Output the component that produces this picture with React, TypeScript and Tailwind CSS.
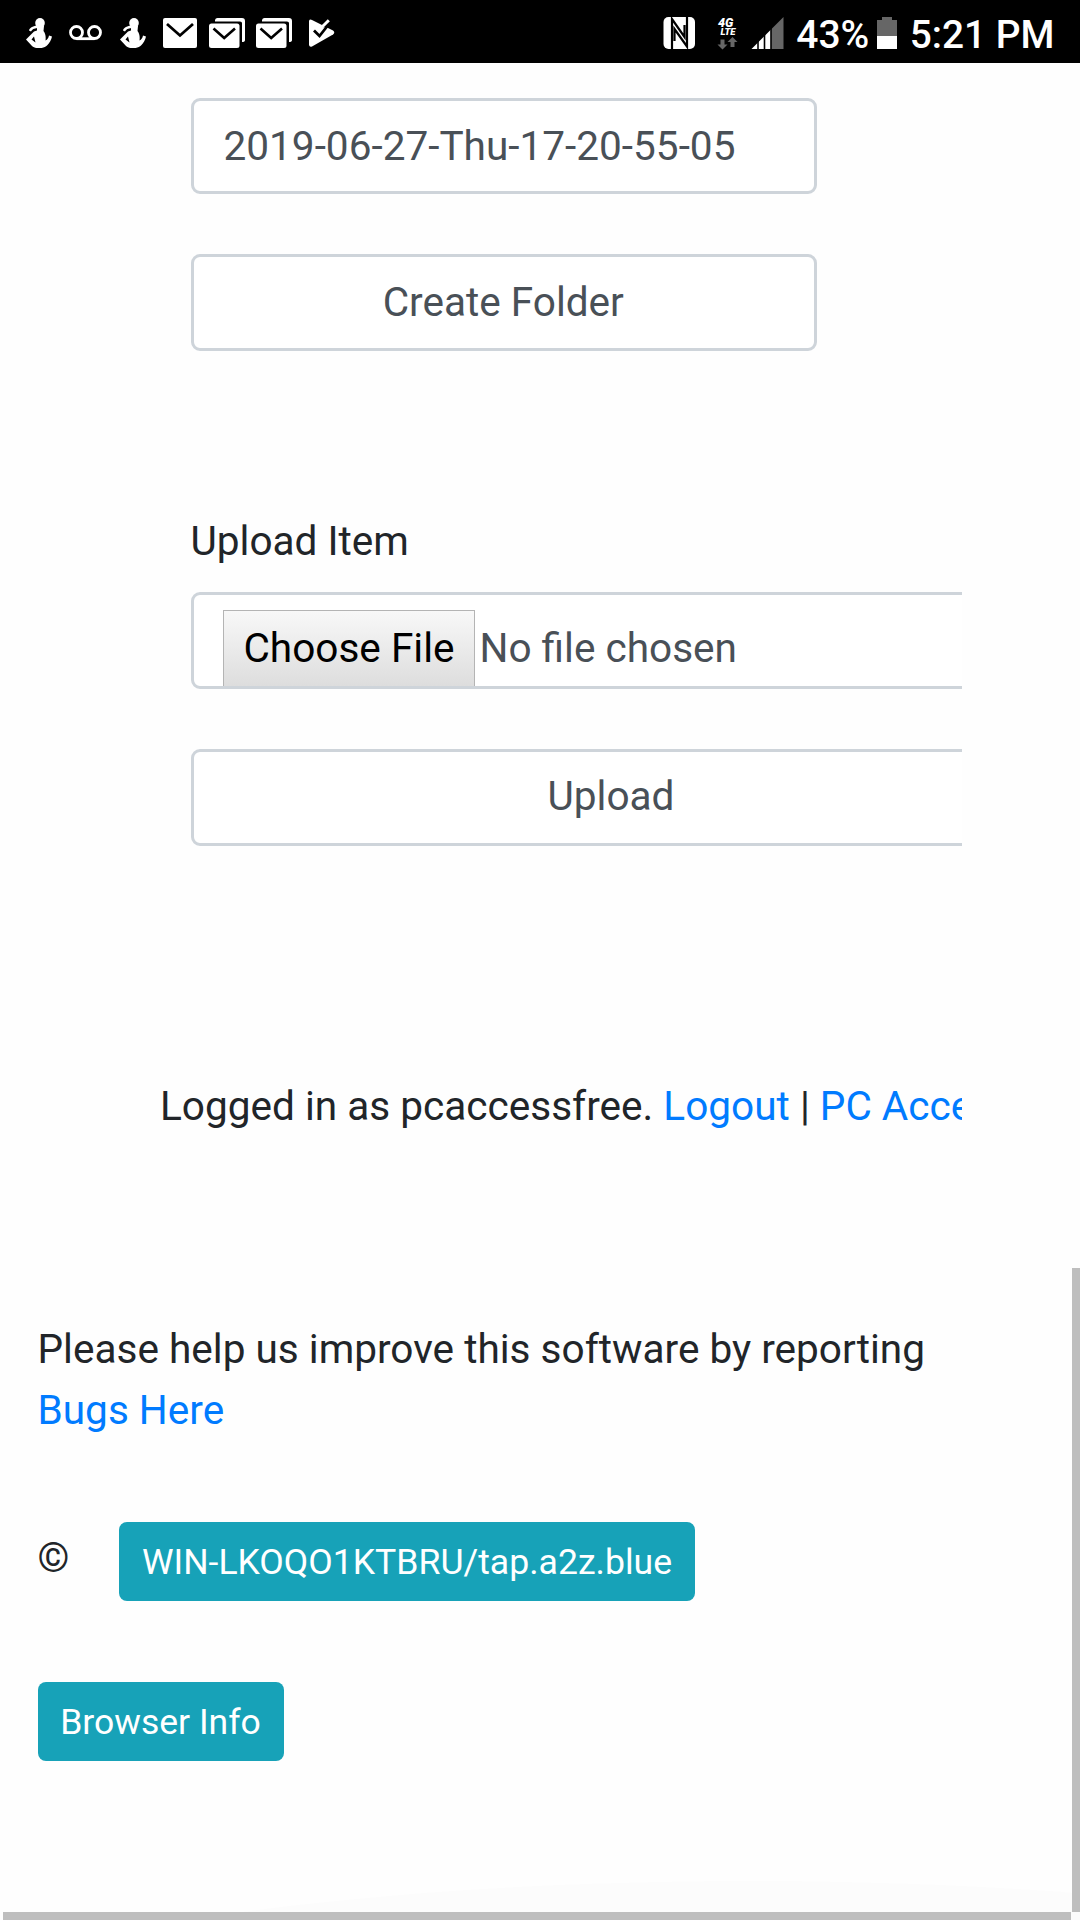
import React from "react";

function PersonIcon() {
  return (
    <svg viewBox="0 0 26 30" width="26" height="30" fill="#fff" className="shrink-0">
      <ellipse cx="14" cy="5" rx="4.8" ry="5" />
      <path d="M11 8h7l-.5 5c2 2.500 2.500 6 2 9.500 2-1 3-2.500 3.500-5l3 1c-.5 3-2.500 6.500-5 9-2.500 3-11 4-15 .5L0 21.500l8-8 3-1z" />
      <path d="M3 12.500c.5-2.500 3.500-4.500 8-5l.5 2.500C8 10.300 6 11.500 5 13.500z" />
      <path d="M5.500 21.500L8 18.500l1.500 6z" fill="#000" />
    </svg>
  );
}

function MailStack() {
  return (
    <svg viewBox="0 0 36 30" width="36" height="30" className="shrink-0">
      <path d="M6 2Q6.500 0 8.500 0H33Q36 0 36 3V22Q36 24 33 24V5Q33 3.500 31 3.500H6z" fill="#fff" />
      <rect x="0" y="5.500" width="30.500" height="24.500" rx="2.500" fill="#fff" />
      <path d="M4.500 10.500L15.200 20L26 10.500" fill="none" stroke="#000" strokeWidth="2.600" />
    </svg>
  );
}

function StatusBar() {
  return (
    <header className="flex h-[63px] w-full items-start bg-black pl-[26px]">
      <div className="mt-[17.500px] flex h-[30px] items-center">
        <PersonIcon />
        <svg viewBox="0 0 33 16" width="33" height="16" fill="none" stroke="#fff" strokeWidth="2.800" className="ml-[17px] shrink-0">
          <circle cx="7.500" cy="7.500" r="6" />
          <circle cx="25.500" cy="7.500" r="6" />
          <path d="M7.500 13.700H25.500" />
        </svg>
        <span className="w-[18px]" />
        <PersonIcon />
        <svg viewBox="0 0 34 30" width="34" height="30" className="ml-[16.500px] shrink-0">
          <rect width="34" height="30" rx="2" fill="#fff" />
          <path d="M4 6L17 17.500L30 6" fill="none" stroke="#000" strokeWidth="2.800" />
        </svg>
        <span className="w-[12.500px]" />
        <MailStack />
        <span className="w-[11px]" />
        <MailStack />
        <svg viewBox="0 0 28 30" width="28" height="30" className="ml-[16px] shrink-0">
          <path d="M1 2.500Q2 1 4 2L25 12.500Q27.500 14.500 25 16.500L4 28.500Q1.500 29.500 1 27z" fill="#fff" />
          <path d="M12.500 9.500L19 1L24 4.500L21.500 9z" fill="#000" />
          <path d="M6 12.500L11.500 18L19 8.500" fill="none" stroke="#000" strokeWidth="2.800" />
          <path d="M10.500 12.500L20.800 2.300" fill="none" stroke="#fff" strokeWidth="3" />
        </svg>
      </div>
      <div className="ml-auto mr-[26px] flex items-start text-white">
        <svg viewBox="0 0 128 34" width="128" height="34" className="mt-[15.500px] shrink-0">
          <rect x="0.500" y="1" width="31.500" height="32" rx="5" fill="#fff" />
          <path d="M9 33V3L21.500 21V9M24 1V30.500L11.500 13V25" fill="none" stroke="#000" strokeWidth="2.200" />
          <text x="55" y="10.500" fill="#fff" fontSize="12.500" fontWeight="900" fontStyle="italic" fontFamily="Roboto, sans-serif">4G</text>
          <text x="57.500" y="18.800" fill="#fff" fontSize="9.500" fontWeight="900" fontStyle="italic" fontFamily="Roboto, sans-serif">LTE</text>
          <path d="M57.500 23.500h4v5h3l-5 5-5-5h3zM67.500 31h4v-5h3l-5-5-5 5h3z" fill="#666" />
          <path d="M88.500 33L108 13.500V33z" fill="#fff" />
          <path d="M108 13.500L120.500 1V33H108z" fill="#666" />
          <path d="M95 20V33M101.500 14V33M108 10V33" stroke="#000" strokeWidth="1.600" />
        </svg>
        <span className="ml-[5px] mt-[11px] w-[72px] whitespace-nowrap text-[39px] leading-[48px] font-medium">43%</span>
        <svg viewBox="0 0 20 33" width="20" height="33" className="ml-[8.500px] mt-[16.500px] shrink-0">
          <path d="M0 3H5V0H15V3H20V20H0z" fill="#666" />
          <path d="M0 19H20V32H0z" fill="#fff" />
        </svg>
        <span className="-mr-[0.500px] ml-[13px] mt-[11px] whitespace-nowrap text-[38.800px] leading-[48px] font-medium">5:21 PM</span>
      </div>
    </header>
  );
}

export default function App() {
  return (
    <div className="relative flex h-[1920px] w-[1080px] flex-col overflow-hidden bg-[#fefefe] font-['Roboto',sans-serif] text-[40.550px] leading-[61px] text-[#212529]">
      <StatusBar />
      <main className="relative z-10 flex flex-col">
        <form className="ml-[191px] mt-[34.500px] flex w-[625.500px] flex-col gap-[60px] text-[#495057]">
          <div className="flex h-[96.500px] items-center rounded-[9px] border-[3px] border-[#ced4da] bg-white pl-[29.500px] pt-[1px]">2019-06-27-Thu-17-20-55-05</div>
          <button type="button" className="h-[96.500px] rounded-[9px] border-[3px] border-[#ced4da] bg-white pr-[1px]">Create Folder</button>
        </form>
        <section className="ml-[160px] mt-[160px] w-[802px] overflow-hidden">
          <div className="ml-[30.500px] flex w-[841px] flex-col">
            <label>Upload Item</label>
            <div className="mt-[20px] flex h-[97px] items-start overflow-hidden rounded-[9px] border-[3px] border-[#ced4da] bg-white pl-[29.500px] pt-[15px] text-[#495057]">
              <span className="flex h-[92px] w-[252px] shrink-0 justify-center border border-[#b4b4b4] bg-linear-to-b from-[#f8f8f8] to-[#d8d8d8] pt-[7px] text-black">Choose File</span>
              <span className="ml-[4.500px] mt-[8px]">No file chosen</span>
            </div>
            <button type="button" className="mt-[60px] h-[97px] rounded-[9px] border-[3px] border-[#ced4da] bg-white pb-px text-[#495057]">Upload</button>
          </div>
          <p className="mt-[230px] whitespace-nowrap">
            Logged in as pcaccessfree. <a className="text-[#007bff]">Logout</a> | <a className="text-[#007bff]">PC Access</a>
          </p>
        </section>
        <footer className="ml-[37.500px] mt-[182px] flex flex-col items-start">
          <p>
            Please help us improve this software by reporting
            <br />
            <a className="text-[#007bff]">Bugs Here</a>
          </p>
          <div className="mt-[81.500px] flex">
            <span className="w-[81.500px] pt-[6px]">©</span>
            <button type="button" className="h-[79px] w-[576px] whitespace-nowrap rounded-[8px] bg-[#17a2b8] pt-[1px] text-[35.600px] text-white">WIN-LKOQO1KTBRU/tap.a2z.blue</button>
          </div>
          <button type="button" className="mt-[81px] h-[79px] w-[246px] rounded-[8px] bg-[#17a2b8] pt-[1px] text-[35.500px] text-white">Browser Info</button>
        </footer>
      </main>
      <div className="absolute left-[-200px] top-[1881px] h-[400px] w-[1900px] rounded-[50%] bg-[#fcfcfc]" />
      <div className="absolute right-0 top-[1268px] h-[644px] w-[8px] bg-[#bebebe]" />
      <div className="absolute bottom-0 left-[3px] h-[8px] w-[1068px] bg-[#bebebe]" />
    </div>
  );
}
